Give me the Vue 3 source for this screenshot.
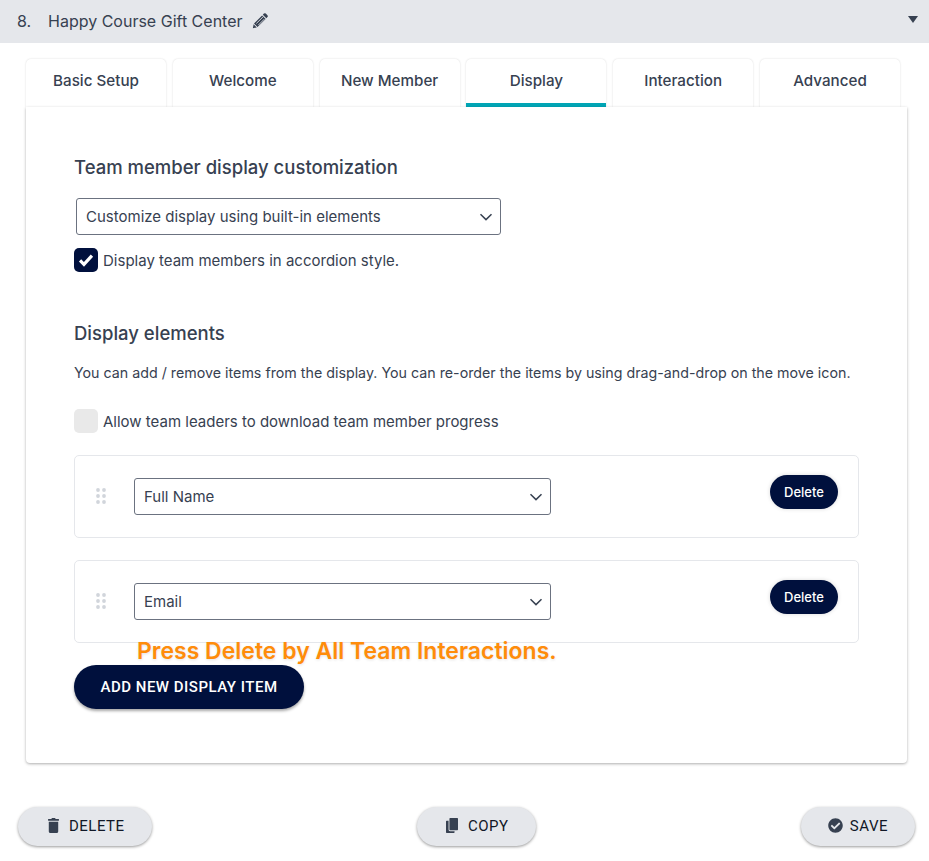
<template>
  <div class="page">
    <div class="header">
      <span class="num">8.</span>
      <span class="name">Happy Course Gift Center</span>
      <svg class="pencil" viewBox="0 0 16 16" width="17" height="17">
        <path d="M11.200 1.500a1.300 1.300 0 0 1 1.800 0l1.500 1.500a1.300 1.300 0 0 1 0 1.800l-1 1-3.300-3.300zM9.500 3.200l3.300 3.300-7.600 7.600-3.300-3.300zM1.500 11.500l3 3-3.700.7z" fill="#374151"/>
        <path d="M4.100 10.800 10.300 4.700M6 12.300l5.600-5.600" stroke="#e5e7eb" stroke-width=".8"/>
      </svg>
      <span class="caret"></span>
    </div>

    <div class="tabs">
      <div v-for="tab in tabs" :key="tab" class="tab" :class="{ active: tab === 'Display' }">{{ tab }}</div>
    </div>

    <div class="panel">
      <h3 class="title">Team member display customization</h3>
      <div class="select main-select">
        <span>Customize display using built-in elements</span>
        <svg class="chev" viewBox="0 0 14 8" width="14" height="8"><path d="M1.5 1.2 7 6.6l5.5-5.4" fill="none" stroke="#374151" stroke-width="1.5"/></svg>
      </div>
      <label class="check-row">
        <span class="box checked">
          <svg viewBox="0 0 14 12" width="16" height="14"><path d="M1.800 6.400 5.200 9.800 12.200 2.200" fill="none" stroke="#fff" stroke-width="2.800"/></svg>
        </span>
        Display team members in accordion style.
      </label>

      <h3 class="title second">Display elements</h3>
      <p class="help">You can add / remove items from the display. You can re-order the items by using drag-and-drop on the move icon.</p>
      <label class="check-row leaders">
        <span class="box"></span>
        Allow team leaders to download team member progress
      </label>

      <div v-for="item in items" :key="item" class="item">
        <svg class="grip" viewBox="0 0 10 16" width="10" height="16">
          <g fill="#d1d5db">
            <circle cx="2" cy="2" r="1.900"/><circle cx="8" cy="2" r="1.900"/>
            <circle cx="2" cy="8" r="1.900"/><circle cx="8" cy="8" r="1.900"/>
            <circle cx="2" cy="14" r="1.900"/><circle cx="8" cy="14" r="1.900"/>
          </g>
        </svg>
        <div class="select item-select">
          <span>{{ item }}</span>
          <svg class="chev" viewBox="0 0 14 8" width="14" height="8"><path d="M1.5 1.2 7 6.6l5.5-5.4" fill="none" stroke="#374151" stroke-width="1.5"/></svg>
        </div>
        <button class="del">Delete</button>
      </div>

      <div class="add-wrap">
        <div class="note">Press Delete by All Team Interactions.</div>
        <button class="add">ADD NEW DISPLAY ITEM</button>
      </div>
    </div>

    <div class="actions">
      <button class="action">
        <svg class="ic-trash" viewBox="0 0 448 512" width="11" height="15" preserveAspectRatio="none"><path d="M32 464a48 48 0 0 0 48 48h288a48 48 0 0 0 48-48V128H32zM432 32H312l-9.400-18.700A24 24 0 0 0 281.100 0H166.800a23.700 23.700 0 0 0-21.400 13.300L136 32H16A16 16 0 0 0 0 48v32a16 16 0 0 0 16 16h416a16 16 0 0 0 16-16V48a16 16 0 0 0-16-16z"/></svg>
        DELETE
      </button>
      <button class="action">
        <svg viewBox="0 0 448 512" width="12" height="15" preserveAspectRatio="none"><path d="M320 448v40c0 13.300-10.700 24-24 24H24c-13.300 0-24-10.700-24-24V120c0-13.300 10.700-24 24-24h72v296c0 30.900 25.100 56 56 56h168zM448 24v368c0 13.300-10.700 24-24 24H152c-13.300 0-24-10.700-24-24V24c0-13.300 10.700-24 24-24h272c13.300 0 24 10.700 24 24z"/></svg>
        COPY
      </button>
      <button class="action">
        <svg class="ic-save" viewBox="0 0 512 512" width="15" height="15"><path d="M504 256c0 137-111 248-248 248S8 393 8 256 119 8 256 8s248 111 248 248zM227.300 387.300l184-184c6.200-6.200 6.200-16.400 0-22.600l-22.600-22.600c-6.200-6.200-16.400-6.200-22.600 0L216 308.100l-70.100-70.100c-6.200-6.200-16.400-6.200-22.600 0l-22.600 22.600c-6.200 6.200-6.200 16.400 0 22.600l104 104c6.200 6.300 16.400 6.300 22.600.1z"/></svg>
        SAVE
      </button>
    </div>
  </div>
</template>

<script setup>
const tabs = ['Basic Setup', 'Welcome', 'New Member', 'Display', 'Interaction', 'Advanced']
const items = ['Full Name', 'Email']
</script>

<style scoped>
.page {
  width: 929px;
  height: 861px;
  overflow: hidden;
  background: #fff;
  font-family: Inter, "Liberation Sans", sans-serif;
  color: #374151;
  font-size: 15px;
}

.header {
  height: 43px;
  box-sizing: border-box;
  padding: 0 11px 2px 17px;
  background: #e5e7eb;
  display: flex;
  align-items: center;
  font-size: 16px;
}

.num {
  width: 31px;
}

.pencil {
  margin-left: 9px;
}

.caret {
  margin-left: auto;
  margin-bottom: 2px;
  border-left: 5px solid transparent;
  border-right: 5px solid transparent;
  border-top: 7px solid #374151;
}

.tabs {
  display: flex;
  gap: 6.8px;
  margin: 16px 0 0 26px;
  height: 48px;
}

.tab {
  width: 140px;
  box-sizing: border-box;
  background: #fff;
  border-radius: 5px 5px 0 0;
  box-shadow: 0 0 2px rgba(0, 0, 0, 0.16);
  text-align: center;
  padding-top: 12px;
  font-size: 15.2px;
  font-weight: 500;
  color: #374151;
}

.tab.active {
  border-bottom: 4px solid #00a5b5;
}

.panel {
  position: relative;
  width: 881px;
  height: 656px;
  margin-left: 26px;
  box-sizing: border-box;
  padding: 48px 48px 0;
  background: #fff;
  border-radius: 0 0 4px 4px;
  box-shadow: 0 1px 3px rgba(0, 0, 0, 0.32);
}

.title {
  margin: 0;
  font-size: 18.5px;
  line-height: 24px;
  font-weight: 500;
  color: #374151;
}

.second {
  margin-top: 49px;
}

.select {
  display: flex;
  align-items: center;
  justify-content: space-between;
  box-sizing: border-box;
  height: 37px;
  background: #fff;
  border: 1px solid #6b7280;
  border-radius: 3px;
  padding: 0 7px 0 9px;
  font-size: 15px;
  color: #374151;
}

.main-select {
  width: 425px;
  margin: 19px 0 0 2px;
}

.check-row {
  display: flex;
  align-items: center;
  gap: 5px;
  height: 24px;
  margin-top: 13px;
  font-size: 15px;
  color: #374151;
}

.box {
  width: 24px;
  height: 24px;
  box-sizing: border-box;
  border-radius: 5px;
  background: #e9e9e9;
  display: flex;
  align-items: center;
  justify-content: center;
}

.box.checked {
  background: #00103d;
}

.help {
  margin: 18px 0 0;
  line-height: 20px;
  font-size: 14.25px;
  color: #374151;
}

.leaders {
  margin-top: 26px;
}

.item {
  display: flex;
  align-items: flex-start;
  box-sizing: border-box;
  width: 785px;
  height: 83px;
  margin-top: 22px;
  border: 1px solid #e5e7eb;
  border-radius: 5px;
  padding: 22px 20px 0 21px;
}

.grip {
  margin-top: 10px;
}

.item-select {
  width: 417px;
  margin-left: 28px;
}

.del {
  margin-left: auto;
  height: 34px;
  width: 68px;
  margin-top: -3px;
  padding-bottom: 2px;
  border: none;
  border-radius: 17px;
  background: #00103d;
  color: #fff;
  font-family: Inter, "Liberation Sans", sans-serif;
  font-size: 13px;
  font-weight: 500;
  box-shadow: 0 0 4px rgba(0, 0, 0, 0.15);
}

.add-wrap {
  position: relative;
  margin-top: 22px;
}

.note {
  position: absolute;
  left: 63px;
  top: -28px;
  font-size: 23px;
  line-height: 28px;
  font-weight: 600;
  color: #ff8c0a;
  white-space: nowrap;
  text-shadow: 0 1px 3px rgba(0, 0, 0, 0.12);
}

.add {
  display: block;
  width: 230px;
  height: 44px;
  border: none;
  border-radius: 22px;
  background: #00103d;
  color: #fff;
  font-family: Roboto, "Liberation Sans", sans-serif;
  font-size: 15px;
  font-weight: 500;
  letter-spacing: 0.5px;
  box-shadow: 0 2px 3px rgba(0, 0, 0, 0.35);
}

.actions {
  display: flex;
  justify-content: space-between;
  margin: 44px 14px 0 18px;
}

.action {
  display: flex;
  align-items: center;
  justify-content: center;
  gap: 10px;
  height: 39px;
  padding: 0 27px 2px 29px;
  border: none;
  border-radius: 20px;
  background: #e5e7eb;
  color: #111827;
  font-family: Roboto, "Liberation Sans", sans-serif;
  font-size: 15px;
  letter-spacing: 0.5px;
  box-shadow: 0 1px 3px rgba(0, 0, 0, 0.4);
}

.action svg {
  fill: #374151;
}

.ic-trash {
  margin-left: 1px;
}

.ic-save {
  margin: 0 -3px 0 -2px;
}
</style>
